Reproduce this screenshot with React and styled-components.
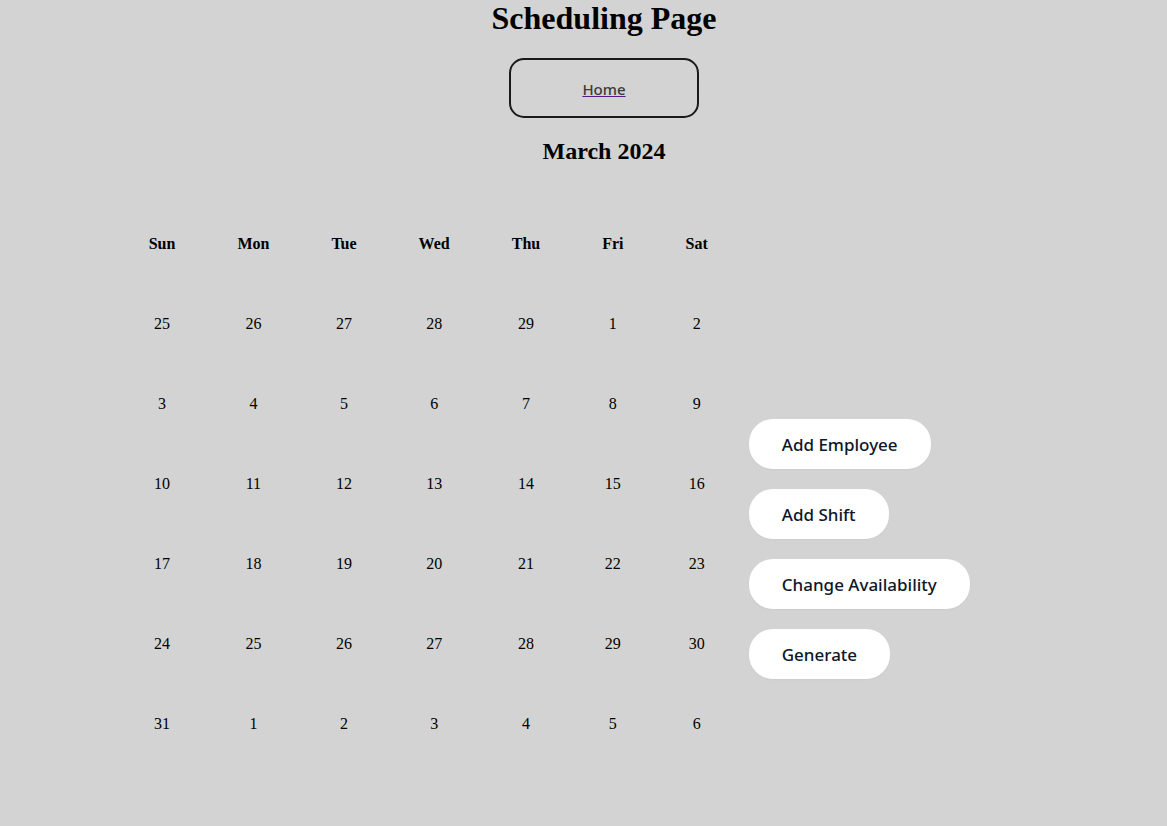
import React from "react";
import styled, { createGlobalStyle } from "styled-components";

const GlobalStyle = createGlobalStyle`
  body {
    margin: 0;
    background: #d3d3d3;
    color: #000;
    font-family: "Liberation Serif", "Times New Roman", serif;
    font-size: 16px;
  }
`;

const Page = styled.main`
  display: flex;
  flex-direction: column;
`;

const Header = styled.header`
  display: flex;
  flex-direction: column;
  align-items: center;
  padding-left: 41px;
`;

const Title = styled.h1`
  margin: 0 0 22px;
  font-size: 32px;
  line-height: 36px;
`;

const Month = styled.h2`
  margin: 20px 0;
  font-size: 24px;
  line-height: 26px;
`;

const HomeLink = styled.a`
  box-sizing: border-box;
  display: flex;
  align-items: center;
  justify-content: center;
  width: 190px;
  height: 60px;
  padding-top: 2px;
  border: 2px solid #1a1a1a;
  border-radius: 15px;
  color: #3b3b3b;
  font-family: "Noto Sans", "Open Sans", sans-serif;
  font-size: 15px;
  font-weight: 500;
  text-decoration-line: underline;
  text-decoration-color: #551a8b;
  text-decoration-thickness: 1px;
`;

const Schedule = styled.section`
  display: flex;
  align-items: flex-start;
  padding: 19px 0 0 10%;
`;

const Calendar = styled.table`
  border-spacing: 2px;
  text-align: center;
  line-height: 18px;

  th,
  td {
    padding: 30px;
  }
`;

const Actions = styled.div`
  display: flex;
  flex-direction: column;
  align-items: flex-start;
  gap: 20px;
  margin: 216px 9px 0;
`;

const ActionButton = styled.button`
  height: 50px;
  padding: 0 33px;
  border: 0;
  border-radius: 24px;
  background: #fff;
  color: #0d172a;
  font-family: "Noto Sans", "Open Sans", sans-serif;
  font-size: 17px;
  font-weight: 500;
  box-shadow: 0 1px 2px rgba(0, 0, 0, 0.03);
  white-space: nowrap;
  cursor: pointer;
`;

const days = ["Sun", "Mon", "Tue", "Wed", "Thu", "Fri", "Sat"];
const weeks = [
  [25, 26, 27, 28, 29, 1, 2],
  [3, 4, 5, 6, 7, 8, 9],
  [10, 11, 12, 13, 14, 15, 16],
  [17, 18, 19, 20, 21, 22, 23],
  [24, 25, 26, 27, 28, 29, 30],
  [31, 1, 2, 3, 4, 5, 6],
];
const actions = ["Add Employee", "Add Shift", "Change Availability", "Generate"];

export default function App() {
  return (
    <Page>
      <GlobalStyle />
      <Header>
        <Title>Scheduling Page</Title>
        <HomeLink href="#home">Home</HomeLink>
        <Month>March 2024</Month>
      </Header>
      <Schedule>
        <Calendar aria-label="March 2024">
          <thead>
            <tr>
              {days.map((day) => (
                <th key={day} scope="col">{day}</th>
              ))}
            </tr>
          </thead>
          <tbody>
            {weeks.map((week, index) => (
              <tr key={index}>
                {week.map((date) => (
                  <td key={date}>{date}</td>
                ))}
              </tr>
            ))}
          </tbody>
        </Calendar>
        <Actions>
          {actions.map((action) => (
            <ActionButton key={action} type="button">{action}</ActionButton>
          ))}
        </Actions>
      </Schedule>
    </Page>
  );
}
